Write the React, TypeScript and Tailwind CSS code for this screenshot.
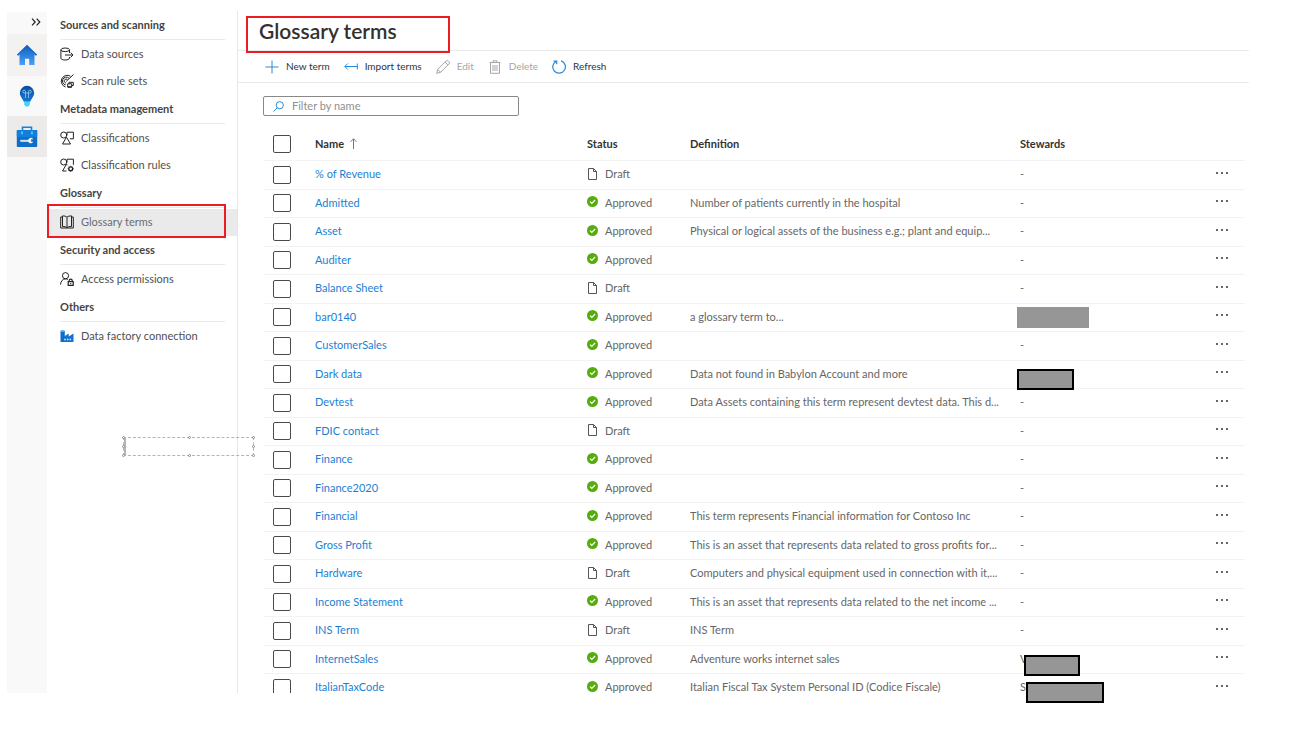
import type { ReactNode } from 'react';

type Term = {
  name: string;
  status: 'Draft' | 'Approved';
  definition?: string;
  steward?: string;
};

const TERMS: Term[] = [
  { name: '% of Revenue', status: 'Draft' },
  { name: 'Admitted', status: 'Approved', definition: 'Number of patients currently in the hospital' },
  { name: 'Asset', status: 'Approved', definition: 'Physical or logical assets of the business e.g.; plant and equip...' },
  { name: 'Auditer', status: 'Approved' },
  { name: 'Balance Sheet', status: 'Draft' },
  { name: 'bar0140', status: 'Approved', definition: 'a glossary term to...', steward: '' },
  { name: 'CustomerSales', status: 'Approved' },
  { name: 'Dark data', status: 'Approved', definition: 'Data not found in Babylon Account and more', steward: '' },
  { name: 'Devtest', status: 'Approved', definition: 'Data Assets containing this term represent devtest data. This d...' },
  { name: 'FDIC contact', status: 'Draft' },
  { name: 'Finance', status: 'Approved' },
  { name: 'Finance2020', status: 'Approved' },
  { name: 'Financial', status: 'Approved', definition: 'This term represents Financial information for Contoso Inc' },
  { name: 'Gross Profit', status: 'Approved', definition: 'This is an asset that represents data related to gross profits for...' },
  { name: 'Hardware', status: 'Draft', definition: 'Computers and physical equipment used in connection with it,...' },
  { name: 'Income Statement', status: 'Approved', definition: 'This is an asset that represents data related to the net income ...' },
  { name: 'INS Term', status: 'Draft', definition: 'INS Term' },
  { name: 'InternetSales', status: 'Approved', definition: 'Adventure works internet sales', steward: 'V' },
  { name: 'ItalianTaxCode', status: 'Approved', definition: 'Italian Fiscal Tax System Personal ID (Codice Fiscale)', steward: 'S' },
];

function HomeIcon() {
  return (
    <svg width="22" height="22" viewBox="0 0 22 22" aria-hidden="true">
      <defs>
        <linearGradient id="home" x1="0" y1="0" x2="0" y2="1">
          <stop offset="0" stopColor="#1467c8" />
          <stop offset="1" stopColor="#4aa0f5" />
        </linearGradient>
      </defs>
      <path d="M11 3.5 3.5 10.5V21H9v-6.2h4.2V21h5.3V10.5z" fill="url(#home)" />
      <path d="M11 .8.8 10.8l1.3 1L11 4l8.900 7.800 1.300-1z" fill="#1263c2" />
    </svg>
  );
}

function BulbIcon() {
  return (
    <svg width="22" height="22" viewBox="0 0 22 22" aria-hidden="true">
      <defs>
        <linearGradient id="bulb" x1="0" y1="0" x2="0" y2="1">
          <stop offset="0" stopColor="#0a4f9c" />
          <stop offset="1" stopColor="#1478d8" />
        </linearGradient>
      </defs>
      <path d="M11 .8a7.200 7.200 0 0 0-7.200 7.200c0 3.300 2.600 5.400 4.100 8.800h6.200c1.500-3.400 4.100-5.500 4.100-8.800A7.200 7.200 0 0 0 11 .8z" fill="url(#bulb)" />
      <path d="M9.500 13V7.600M12.500 13V7.600M9.500 8H8.100a1.400 1.400 0 1 1 1.400-1.400V8h3V6.600A1.400 1.400 0 1 1 13.900 8h-1.400" fill="none" stroke="#8cc4f2" strokeWidth=".9" />
      <path d="M8.200 16.800h5.600v2.400l-1.500 2.200H9.700l-1.500-2.200z" fill="#43d3f7" />
    </svg>
  );
}

function ToolboxIcon() {
  return (
    <svg width="22" height="22" viewBox="0 0 22 22" aria-hidden="true">
      <path d="M6.500 4.500V1.300h9v3.200" fill="none" stroke="#1583dd" strokeWidth="1.600" />
      <rect x=".8" y="4" width="20.400" height="17" rx=".8" fill="#0f6cc7" />
      <rect x=".8" y="4" width="20.400" height="7" rx=".8" fill="#1180da" />
      <path d="M5.200 5.500h1.700v2.700H5.200zM15.100 5.500h1.700v2.700h-1.700z" fill="#4fd0f6" />
      <path d="M4.500 14.200h7.700a2.700 2.700 0 0 1 4.700-1.200h-2v2.900h2a2.700 2.700 0 0 1-4.700-.5H4.500z" fill="#fff" stroke="#fff" strokeWidth=".4" />
    </svg>
  );
}

function Stroke({ children }: { children: ReactNode }) {
  return (
    <svg width="14" height="14" viewBox="0 0 14 14" fill="none" stroke="currentColor" strokeWidth="1" className="shrink-0" aria-hidden="true">
      {children}
    </svg>
  );
}

const DataSourcesIcon = () => (
  <Stroke>
    <ellipse cx="5.200" cy="2.800" rx="4.300" ry="1.800" />
    <path d="M.9 2.800v8.400c0 1 1.900 1.800 4.300 1.800s4.300-.8 4.300-1.800V10M9.500 2.800V6M5 8h8M10.700 5.700 13 8l-2.300 2.300" />
  </Stroke>
);

const ScanIcon = () => (
  <Stroke>
    <path d="M10.500 2.200A6 6 0 1 0 5.500 13M9 4.200a3.900 3.900 0 1 0-3.300 6.700M7.600 5.900a1.900 1.900 0 1 0-1.500 3M6.200 7.400 13.500.5" />
    <path d="M7.700 9.800h4v3.200h-4zM9 9.800V8.300h4.300v3.200h-1.500" />
    <path d="M7.700 13h4" strokeWidth="1.400" />
  </Stroke>
);

const ClassIcon = () => (
  <Stroke>
    <circle cx="3.700" cy="4" r="3" />
    <path d="M7 4.500V1.200h6.400v6.600H9.800M6.500 6.200l4 6.800h-8z" />
  </Stroke>
);

const ClassRulesIcon = () => (
  <Stroke>
    <circle cx="3.700" cy="4" r="3" />
    <path d="M7 4.500V1.200h6.400v5.600M7.500 7.200 6.500 6.200 2.500 13h4" />
    <circle cx="10.700" cy="10.800" r="1.900" strokeWidth="1.300" />
    <path d="M10.700 7.800v1M10.700 12.800v1M7.700 10.800h1M12.700 10.800h1M8.600 8.700l.7.7M12.100 12.200l.7.7M12.800 8.700l-.7.7M9.300 12.200l-.7.7" />
  </Stroke>
);

const BookIcon = () => (
  <Stroke>
    <path d="M7 2.200C6 1.200 4.500.9 2.500.9v10.600c2 0 3.500.3 4.500 1.200 1-.9 2.500-1.200 4.500-1.200V.9C9.500.9 8 1.200 7 2.200zM7 2.200v10.500" />
    <path d="M2.500 2H.7v11h12.600V2h-1.800" />
  </Stroke>
);

const AccessIcon = () => (
  <Stroke>
    <circle cx="5.500" cy="3.700" r="3.100" />
    <path d="M.5 12.600c.3-3.400 2.300-5.700 5-5.700 1 0 1.700.2 2.300.6" />
    <path d="M8.200 9.700h5v3.700h-5zM9.200 9.700V8.600a1.500 1.500 0 0 1 3 0v1.100" strokeWidth="1.200" />
    <path d="M10.700 11v1.200" />
  </Stroke>
);

const FactoryIcon = () => (
  <svg width="14" height="14" viewBox="0 0 14 14" className="shrink-0" aria-hidden="true">
    <path d="M.5 2h4.300v11H.5z" fill="#0f6cc7" />
    <ellipse cx="2.650" cy="2" rx="2.150" ry="1.100" fill="#58b4ee" />
    <path d="M4 7.500 8.700 4.500v3l4.800-3V13H4z" fill="#1173cf" />
    <path d="M4.200 9.800h1.500v1.500H4.200zM6.900 9.800h1.500v1.500H6.900zM9.600 9.800h1.500v1.500H9.600z" fill="#d4ecff" />
  </svg>
);

const SECTIONS = [
  { title: 'Sources and scanning', items: [{ label: 'Data sources', Icon: DataSourcesIcon }, { label: 'Scan rule sets', Icon: ScanIcon }] },
  { title: 'Metadata management', items: [{ label: 'Classifications', Icon: ClassIcon }, { label: 'Classification rules', Icon: ClassRulesIcon }] },
  { title: 'Glossary', items: [{ label: 'Glossary terms', Icon: BookIcon }] },
  { title: 'Security and access', items: [{ label: 'Access permissions', Icon: AccessIcon }] },
  { title: 'Others', items: [{ label: 'Data factory connection', Icon: FactoryIcon }] },
];

function Rail() {
  return (
    <div className="mt-px flex w-10 shrink-0 flex-col bg-[#f9f9f9]">
      <button aria-label="Expand menu" className="flex h-[22px] items-center justify-end pr-1.5 pb-0.5 text-[#222]">
        <svg width="10" height="8" viewBox="0 0 10 8" fill="none" stroke="currentColor" strokeWidth="1.200" aria-hidden="true">
          <path d="M1 .7 4.200 4 1 7.300M5.600.7 8.800 4 5.600 7.300" />
        </svg>
      </button>
      <button aria-label="Home" className="flex h-[42px] items-center justify-center bg-[#f3f2f1]"><HomeIcon /></button>
      <button aria-label="Insights" className="flex h-10 items-center justify-center"><BulbIcon /></button>
      <button aria-label="Management" className="flex h-[41px] items-center justify-center bg-[#edebe9]"><ToolboxIcon /></button>
    </div>
  );
}

function Sidebar() {
  return (
    <nav className="w-[191px] shrink-0 border-r border-[#e6e6e6]">
      {SECTIONS.map((s) => (
        <section key={s.title}>
          <h2 className="mr-3 mb-px ml-[13px] flex h-[29px] items-center border-b border-[#eaeaea] text-[11px] font-bold text-[#444]">{s.title}</h2>
          {s.items.map(({ label, Icon }) => (
            <a
              key={label}
              href="#"
              className={`relative flex h-[27px] items-center gap-[7px] pl-[13px] text-[11px] ${label === 'Glossary terms' ? 'bg-[#eaeaea] text-[#6a6a6a]' : 'text-[#505050]'}`}
            >
              <span className="flex pb-0.5 text-[#222]"><Icon /></span>
              {label}
              {label === 'Glossary terms' && (
                <span className="absolute -top-[5px] right-[11px] -bottom-0.5 left-0 border-2 border-[#ec1c24]" />
              )}
            </a>
          ))}
        </section>
      ))}
    </nav>
  );
}

function Toolbar() {
  const base = 'flex items-center gap-[7px]';
  return (
    <div className="flex h-8 items-center gap-3.5 border-b border-[#eaeaea] pl-[27px] text-[10px] text-[#333]">
      <button className={base}>
        <span className="text-[#2a8ad8]"><Stroke><path d="M7 .5v13M.5 7h13" /></Stroke></span>
        New term
      </button>
      <button className={base}>
        <span className="text-[#2a8ad8]"><Stroke><path d="M13.300 3.500v6M.8 6.500h12.500M3.800 3.500l-3 3 3 3" /></Stroke></span>
        Import terms
      </button>
      <button disabled className={`${base} text-[#a6a6a6]`}>
        <Stroke><path d="M.7 13.300l1-3.900L10 1.100a1.600 1.600 0 0 1 2.300 0l.6.6a1.600 1.600 0 0 1 0 2.300l-8.300 8.300zM9 2.100 11.900 5M1.700 9.400l2.900 2.900" /></Stroke>
        Edit
      </button>
      <button disabled className={`${base} text-[#a6a6a6]`}>
        <Stroke><path d="M1.500 2.500h11M5 2.500V.8h4v1.700M2.500 2.500v10.800h9V2.500M5 5v6M7 5v6M9 5v6" /></Stroke>
        Delete
      </button>
      <button className={base}>
        <span className="text-[#2a8ad8]">
          <Stroke><path d="M9 .9A6.300 6.300 0 1 1 4 1.400M1.500 1.100h3.200v3.200" strokeWidth="1.200" /></Stroke>
        </span>
        Refresh
      </button>
    </div>
  );
}

function Status({ value }: { value: Term['status'] }) {
  return (
    <span className="flex items-center gap-[7px]">
      <span className="pb-0.5">
        {value === 'Draft' ? (
          <svg width="11" height="12" viewBox="0 0 11 12" fill="none" stroke="#555" aria-hidden="true">
            <path d="M1.500.5h5l3 3v8h-8zM6.500.5v3h3" />
          </svg>
        ) : (
          <svg width="11" height="12" viewBox="0 0 11 12" aria-hidden="true">
            <circle cx="5.500" cy="5.500" r="5.500" fill="#57ac0d" />
            <path d="M3 5.600 4.800 7.300 8.100 4" fill="none" stroke="#fff" strokeWidth="1.200" />
          </svg>
        )}
      </span>
      {value}
    </span>
  );
}

function Check({ label }: { label: string }) {
  return (
    <input
      type="checkbox"
      aria-label={label}
      className="ml-[10px] block size-[18px] appearance-none rounded-xs border border-[#4a4a4a] bg-white checked:bg-[#0078d4]"
    />
  );
}

function TermTable() {
  return (
    <table className="w-full table-fixed border-collapse text-left text-[11px] whitespace-nowrap text-[#666]">
      <colgroup>
        <col className="w-[52px]" />
        <col className="w-[272px]" />
        <col className="w-[103px]" />
        <col />
        <col className="w-[195px]" />
        <col className="w-[30px]" />
      </colgroup>
      <thead>
        <tr className="h-8 border-b border-[#f3f3f3] text-[#333]">
          <th className="p-0"><Check label="Select all" /></th>
          <th className="p-0 font-bold">
            <span className="flex items-center gap-1.5">
              Name
              <svg width="7" height="11" viewBox="0 0 7 11" fill="none" stroke="#777" aria-hidden="true">
                <path d="M3.500 11V.8M.5 3.800l3-3 3 3" />
              </svg>
            </span>
          </th>
          <th className="p-0 font-bold">Status</th>
          <th className="p-0 font-bold">Definition</th>
          <th className="p-0 font-bold">Stewards</th>
          <th className="p-0" aria-label="Actions" />
        </tr>
      </thead>
      <tbody>
        {TERMS.map((t) => (
          <tr key={t.name} className="h-[29px] border-b border-[#f3f3f3] even:h-7">
            <td className="p-0"><Check label={`Select ${t.name}`} /></td>
            <td className="p-0"><a href="#" className="text-[#1b7fd4]">{t.name}</a></td>
            <td className="p-0"><Status value={t.status} /></td>
            <td className="overflow-hidden p-0 text-ellipsis">{t.definition}</td>
            <td className="p-0">{t.steward ?? '-'}</td>
            <td className="p-0">
              <button aria-label={`More actions for ${t.name}`} className="block pb-1">
                <svg width="14" height="4" viewBox="0 0 14 4" fill="#333" aria-hidden="true">
                  <circle cx="2" cy="2" r="1" />
                  <circle cx="7" cy="2" r="1" />
                  <circle cx="12" cy="2" r="1" />
                </svg>
              </button>
            </td>
          </tr>
        ))}
      </tbody>
    </table>
  );
}

function TextFrame() {
  const handle = 'absolute size-[3px] rounded-full border border-[#8a8a8a] bg-white';
  return (
    <div className="absolute top-[437px] left-[123px] h-[19px] w-[131px] border border-dashed border-[#8fbfe4]">
      <span className="absolute top-0 bottom-0 left-0 w-0.5 bg-[#b5b5b5]" />
      <span className={`${handle} -top-0.5 -left-0.5`} />
      <span className={`${handle} -top-0.5 left-16`} />
      <span className={`${handle} -top-0.5 -right-0.5`} />
      <span className={`${handle} top-[7px] -left-0.5`} />
      <span className={`${handle} top-[7px] -right-0.5`} />
      <span className={`${handle} -bottom-0.5 -left-0.5`} />
      <span className={`${handle} -bottom-0.5 left-16`} />
      <span className={`${handle} -right-0.5 -bottom-0.5`} />
    </div>
  );
}

export default function App() {
  return (
    <div className="relative flex h-screen bg-white pt-[11px] pb-[50px] pl-[7px] font-['Lato','Open_Sans',sans-serif]">
      <Rail />
      <Sidebar />
      <main className="flex min-w-0 flex-1 flex-col overflow-hidden pr-[43px]">
        <div className="flex h-10 shrink-0 items-center border-b border-[#eaeaea] pl-[21px]">
          <h1 className="text-[21px] font-semibold text-[#323130]">Glossary terms</h1>
        </div>
        <div className="shrink-0"><Toolbar /></div>
        <div className="pt-[13px] pr-1 pl-[25px]">
          <label className="mb-3 flex h-5 w-64 items-center gap-2 rounded-xs border border-[#8a8886] pl-[9px]">
            <svg width="11" height="11" viewBox="0 0 11 11" fill="none" stroke="#2a8ad8" aria-hidden="true">
              <circle cx="6.800" cy="4.200" r="3.600" />
              <path d="M4.200 6.800.5 10.500" />
            </svg>
            <input type="text" aria-label="Filter by name" placeholder="Filter by name" className="min-w-0 flex-1 bg-transparent text-[11px] outline-none placeholder:text-[#8f8f8f]" />
          </label>
          <TermTable />
        </div>
      </main>

      <div className="absolute top-4 left-[246px] h-[37px] w-[204px] border-2 border-[#ec1c24]" />
      <TextFrame />
      <div className="absolute top-[307px] left-[1017px] h-[21px] w-[72px] bg-[#969696]" />
      <div className="absolute top-[369px] left-[1017px] h-[21px] w-[57px] border-2 border-black bg-[#969696]" />
      <div className="absolute top-[655px] left-[1024px] h-[21px] w-14 border-2 border-black bg-[#969696]" />
      <div className="absolute top-[682px] left-[1026px] h-[21px] w-[78px] border-2 border-black bg-[#969696]" />
    </div>
  );
}
